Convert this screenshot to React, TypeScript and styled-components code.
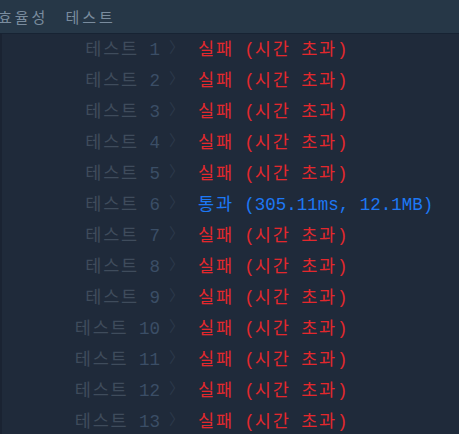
import React from "react";
import styled, { createGlobalStyle } from "styled-components";

const GlobalStyle = createGlobalStyle`
    html, body {
        margin: 0;
        padding: 0;
        background-color: #1f2a3a;
    }
    * {
        box-sizing: border-box;
    }
`

const Panel = styled.div`
    width: 459px;
    height: 434px;
    overflow: hidden;
    display: flex;
    flex-direction: column;
    background-color: #1f2a3a;
    font-family: "Liberation Mono", "Noto Sans CJK KR", monospace;
`

const TabBar = styled.div`
    height: 34px;
    flex-shrink: 0;
    display: flex;
    align-items: center;
    gap: 17px;
    background-color: #263747;
    border-bottom: 1px solid #172333;
    overflow: hidden;
`

const Tab = styled.div<{ $clipped?: boolean }>`
    margin-left: ${(props) => (props.$clipped ? "-2px" : "0")};
    color: #7a8c9e;
    font-family: "Noto Sans CJK KR", sans-serif;
    font-size: 15px;
    letter-spacing: 3px;
    white-space: nowrap;
`

const Results = styled.div`
    flex: 1;
    display: flex;
    flex-direction: column;
    border-left: 2px solid #1a2332;
`

const Row = styled.div`
    height: 31px;
    padding-bottom: 5px;
    display: grid;
    grid-template-columns: 158px 38px auto;
    align-items: center;
    font-size: 17.5px;
    white-space: nowrap;
`

const Label = styled.div`
    justify-self: end;
    color: #3f4c5c;
`

const Num = styled.span`
    color: #3b4e66;
`

const Chevron = styled.span`
    justify-self: start;
    padding-left: 9px;
    color: #2c394a;
    font-size: 15px;
`

const Result = styled.div<{ $pass?: boolean }>`
    color: ${(props) => (props.$pass ? "#1d78f5" : "#e3282d")};
`

// hangul glyphs sit a little wider apart than the mono cells
const Ko = styled.span`
    letter-spacing: 1.8px;
`

const withKo = (text: string) =>
    text.split(/([가-힣]+)/).map((part, i) =>
        /[가-힣]/.test(part) ? <Ko key={i}>{part}</Ko> : part
    )

const tests = Array.from({ length: 13 }, (_, i) => ({
    id: i + 1,
    pass: i === 5,
    detail: i === 5 ? "(305.11ms, 12.1MB)" : "(시간 초과)",
}))

const App = () => {
    return (
        <>
            <GlobalStyle />
            <Panel>
                <TabBar>
                    <Tab $clipped>효율성</Tab>
                    <Tab>테스트</Tab>
                </TabBar>
                <Results>
                    {tests.map((t) => (
                        <Row key={t.id}>
                            <Label>
                                {withKo("테스트 ")}<Num>{t.id}</Num>
                            </Label>
                            <Chevron>〉</Chevron>
                            <Result $pass={t.pass}>
                                {withKo(`${t.pass ? "통과" : "실패"} ${t.detail}`)}
                            </Result>
                        </Row>
                    ))}
                </Results>
            </Panel>
        </>
    )
}

export default App;
